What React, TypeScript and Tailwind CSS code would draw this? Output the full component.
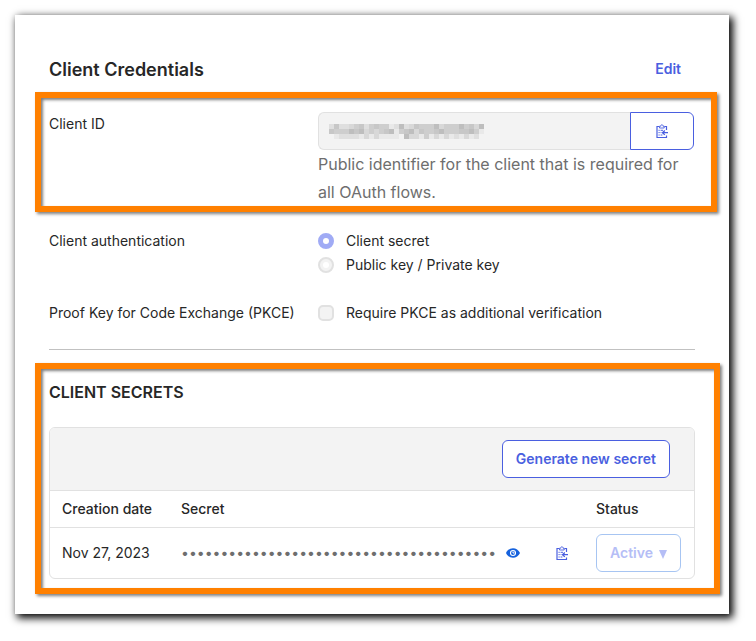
import { useState, type ReactNode } from "react";

const MASK_ROWS = [
  [2, 5, 2, 2, 3, 4, 5, 2, 4, 5, 4, 4, 1, 2, 6, 2, 3, 5, 4, 4, 4, 6, 3, 4, 4, 4, 6, 4, 5, 3, 6],
  [5, 4, 4, 4, 6, 5, 6, 3, 4, 3, 4, 5, 6, 1, 4, 5, 6, 3, 5, 4, 4, 5, 6, 4, 4, 4, 5, 5, 6, 4, 1],
  [0, 1, 2, 2, 2, 2, 1, 3, 1, 3, 1, 1, 1, 1, 0, 6, 3, 3, 1, 4, 1, 3, 1, 3, 1, 2, 1, 3, 1, 2, 0],
];
const SHADES = ["#f3f3f3", "#e9e9e9", "#dfdfdf", "#d8d8d8", "#cecece", "#c7c7c7", "#bebebe"];
const SECRET = "0123456789012345678901234567890123456789";

function MaskedValue() {
  return (
    <svg width="155" height="15" viewBox="0 0 155 15" shapeRendering="crispEdges" aria-hidden="true">
      {MASK_ROWS.map((row, y) =>
        row.map((shade, x) => (
          <rect key={`${x}-${y}`} x={x * 5} y={y * 5} width="5" height="5" fill={SHADES[shade]} />
        )),
      )}
    </svg>
  );
}

function ClipboardIcon() {
  return (
    <svg width="12" height="14" viewBox="0 0 12 14" fill="none" stroke="#4a5fe0" aria-hidden="true">
      <path d="M3 2.5H1V13.5H10.5V11.5M8.5 2.5H10.5V6" strokeWidth="1.2" />
      <path d="M3.5 4V2.2H4.8C4.8 .2 7 .2 7 2.2H8.2V4Z" strokeWidth=".9" />
      <path d="M2.5 6.3H3.7M4.6 6.3H7M2.5 8.6H3.7M4.6 8.6H5.4M2.5 11H3.7M4.6 11H6.4" />
      <path d="M12 8.7H6.8M8.8 6.5L6.5 8.7L8.8 10.9" strokeWidth="1.3" />
    </svg>
  );
}

function EyeIcon() {
  return (
    <svg width="14" height="10" viewBox="0 0 14 10" aria-hidden="true">
      <path d="M0 5C1.5 1.9 4 .2 7 .2S12.5 1.9 14 5C12.5 8.1 10 9.8 7 9.8S1.5 8.1 0 5Z" fill="#1662dd" />
      <circle cx="7" cy="5" r="2.5" fill="none" stroke="#fff" strokeWidth="1.1" />
      <path d="M7 3.5V5H8.5" fill="none" stroke="#fff" />
    </svg>
  );
}

function Highlight({ className, children }: { className: string; children: ReactNode }) {
  return (
    <section
      className={`border-6 border-[#ff8000] shadow-[2px_2px_3px_0px_#00000080,inset_2px_2px_3px_0px_#00000080] ${className}`}
    >
      {children}
    </section>
  );
}

const radio =
  "flex size-4 shrink-0 appearance-none items-center justify-center rounded-full border-2 border-[#e1e1e1] bg-[#f3f3f3] before:size-[6px] before:rounded-full before:bg-white checked:border-[#a0abf5] checked:bg-[#a0abf5]";

export default function App() {
  const [method, setMethod] = useState("secret");
  const [pkce, setPkce] = useState(false);
  const [visible, setVisible] = useState(false);

  return (
    <div className="pt-[15px] pr-[27px] pb-[27px] pl-[15px] font-['Inter',sans-serif] text-sm text-[#272727]">
      <main className="bg-white pt-10 pr-[9px] pb-5 pl-5 shadow-[3px_3px_8px_1px_#000]">
        <header className="flex items-start justify-between pr-[39px] pb-2 pl-[14px]">
          <h1 className="text-lg leading-[29px] font-semibold">Client Credentials</h1>
          <a href="#edit" className="leading-7 font-semibold text-[#4a5fe0]">
            Edit
          </a>
        </header>

        <Highlight className="mr-[3px] grid grid-cols-[269px_1fr] pt-[14px] pr-[17px] pl-2">
          <label htmlFor="client-id" className="leading-6">
            Client ID
          </label>
          <div>
            <div className="flex h-[38px]">
              <div className="relative flex-1">
                <input
                  id="client-id"
                  readOnly
                  className="h-full w-full rounded-l-md border border-r-0 border-[#e1e1e1] bg-[#f3f3f3] px-3"
                />
                <span className="pointer-events-none absolute inset-y-0 left-[11px] flex items-center">
                  <MaskedValue />
                </span>
              </div>
              <button
                type="button"
                aria-label="Copy client ID"
                className="flex w-16 items-center justify-center rounded-r-md border border-[#4a5fe0] bg-white"
              >
                <ClipboardIcon />
              </button>
            </div>
            <p className="text-base leading-7 text-[#6e6e6e]">
              Public identifier for the client that is required for all OAuth flows.
            </p>
          </div>
        </Highlight>

        <div className="mt-[17px] mr-[25px] ml-[14px] border-b border-[#c1c1c1] pb-6 leading-6">
          <div role="radiogroup" aria-labelledby="auth-label" className="grid grid-cols-[269px_1fr]">
            <span id="auth-label">Client authentication</span>
            <div>
              <label className="flex items-center gap-3">
                <input type="radio" name="auth" className={radio} checked={method === "secret"} onChange={() => setMethod("secret")} />
                Client secret
              </label>
              <label className="flex items-center gap-3">
                <input type="radio" name="auth" className={radio} checked={method === "key"} onChange={() => setMethod("key")} />
                Public key / Private key
              </label>
            </div>
          </div>
          <div className="mt-6 grid grid-cols-[269px_1fr]">
            <span>Proof Key for Code Exchange (PKCE)</span>
            <label className="flex items-center gap-3">
              <input
                type="checkbox"
                checked={pkce}
                onChange={() => setPkce(!pkce)}
                className="size-4 shrink-0 appearance-none rounded-[5px] border-2 border-[#e1e1e1] bg-[#f3f3f3] checked:bg-[#a0abf5]"
              />
              Require PKCE as additional verification
            </label>
          </div>
        </div>

        <Highlight className="mt-[13px] pt-[11px] pr-[19px] pb-[9px] pl-2">
          <h2 className="text-base leading-6 font-semibold">CLIENT SECRETS</h2>
          <div className="mt-[23px] overflow-hidden rounded-md border border-[#e1e1e1]">
            <div className="flex justify-end border-b border-[#e1e1e1] bg-[#f3f3f3] py-3 pr-6">
              <button
                type="button"
                className="h-[38px] rounded-md border border-[#4a5fe0] bg-white px-[13px] font-semibold text-[#4a5fe0]"
              >
                Generate new secret
              </button>
            </div>
            <table className="w-full table-fixed text-left">
              <thead>
                <tr className="h-9 border-b border-[#e1e1e1]">
                  <th className="w-[131px] pl-3 font-medium">Creation date</th>
                  <th className="font-medium">Secret</th>
                  <th className="w-[98px] font-medium">Status</th>
                </tr>
              </thead>
              <tbody>
                <tr className="h-[51px]">
                  <td className="pl-3">Nov 27, 2023</td>
                  <td>
                    <div className="flex items-center pr-7">
                      <input
                        type={visible ? "text" : "password"}
                        readOnly
                        aria-label="Secret"
                        value={SECRET}
                        className="min-w-0 flex-1 text-[#6e6e6e]"
                      />
                      <button type="button" aria-label="Show secret" onClick={() => setVisible(!visible)} className="ml-2">
                        <EyeIcon />
                      </button>
                      <button type="button" aria-label="Copy secret" className="ml-9">
                        <ClipboardIcon />
                      </button>
                    </div>
                  </td>
                  <td>
                    <div className="mr-[13px] flex h-[38px] items-center justify-center gap-[6px] rounded-md border border-[#a7c5f2] font-semibold text-[#b5bef6]">
                      <select aria-label="Status" className="field-sizing-content appearance-none">
                        <option>Active</option>
                      </select>
                      <svg width="8" height="13" viewBox="0 0 8 13" fill="currentColor" aria-hidden="true">
                        <path d="M0 4H8L4 13Z" />
                      </svg>
                    </div>
                  </td>
                </tr>
              </tbody>
            </table>
          </div>
        </Highlight>
      </main>
    </div>
  );
}
